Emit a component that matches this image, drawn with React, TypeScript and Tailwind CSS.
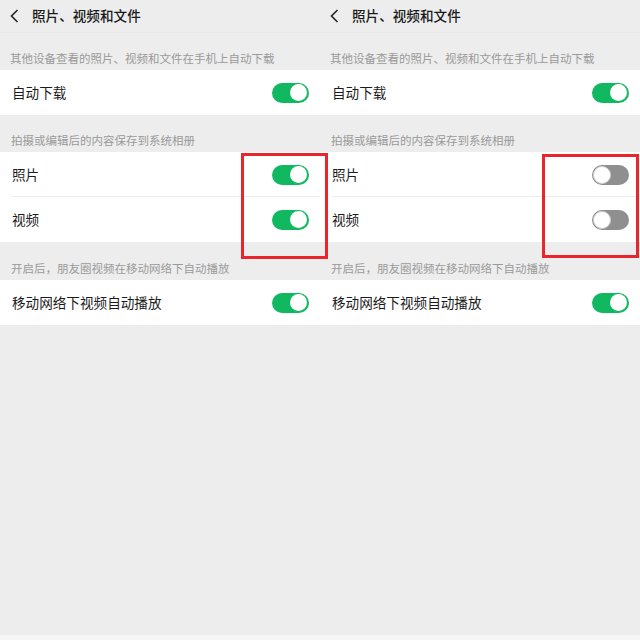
import React from "react";

const font = { fontFamily: '"Noto Sans CJK SC", "Noto Sans", sans-serif' };

function Toggle({ on }: { on: boolean }) {
  return on ? (
    <div className="w-[37px] h-[20px] rounded-full bg-[#10b860] flex items-center justify-end pr-[2px]">
      <div className="w-[17px] h-[17px] rounded-full bg-white" />
    </div>
  ) : (
    <div className="w-[37px] h-[20px] rounded-full bg-[#8f8f8f] flex items-center justify-start pl-[1px]">
      <div className="w-[18px] h-[18px] rounded-full bg-white border border-[#d0d0d0]" />
    </div>
  );
}

function Row({ label, on, divider }: { label: string; on: boolean; divider?: boolean }) {
  return (
    <div className="relative h-[45px] bg-white flex items-center justify-between pl-[12px] pr-[11px]">
      <span className="text-[13.6px] text-[#1c1c1c] leading-none">{label}</span>
      <Toggle on={on} />
      {divider && <div className="absolute bottom-0 left-[12px] right-0 h-px bg-[#ececec]" />}
    </div>
  );
}

function Label({ text, h }: { text: string; h: string }) {
  return (
    <div className={`${h} flex items-end pl-[11px] pb-[6px]`}>
      <span className="text-[11.5px] text-[#9a9a9a] leading-none">{text}</span>
    </div>
  );
}

function Panel({ on }: { on: boolean }) {
  return (
    <div className="w-[320px] h-[640px] flex flex-col bg-[#ededed]" style={font}>
      <div className="h-[33px] flex items-center pl-[10px] border-b border-[#e6e6e6]">
        <svg width="9" height="14" viewBox="0 0 9 14" className="mr-[13px]">
          <path d="M7.5 1 L1.5 7 L7.5 13" fill="none" stroke="#222" strokeWidth="1.6" />
        </svg>
        <span className="text-[13.6px] font-medium text-[#1a1a1a] leading-none">照片、视频和文件</span>
      </div>
      <div className="h-[37px] flex items-end pl-[10px] pb-[6px]">
        <span className="text-[11.5px] text-[#9a9a9a] leading-none">
          其他设备查看的照片、视频和文件在手机上自动下载
        </span>
      </div>
      <Row label="自动下载" on />
      <Label h="h-[37px]" text="拍摄或编辑后的内容保存到系统相册" />
      <Row label="照片" on={on} divider />
      <Row label="视频" on={on} />
      <Label h="h-[38px]" text="开启后，朋友圈视频在移动网络下自动播放" />
      <Row label="移动网络下视频自动播放" on />
      <div className="flex-1" />
      <div className="h-[5px] bg-[#f6f6f6]" />
    </div>
  );
}

export default function App() {
  return (
    <div className="relative w-[640px] h-[640px] flex overflow-hidden">
      <Panel on />
      <Panel on={false} />
      <div className="absolute left-[241px] top-[153px] w-[87px] h-[106px] border-[3px] border-[#e8262c]" />
      <div className="absolute left-[542px] top-[154px] w-[97px] h-[104px] border-[3px] border-[#e8262c]" />
    </div>
  );
}
